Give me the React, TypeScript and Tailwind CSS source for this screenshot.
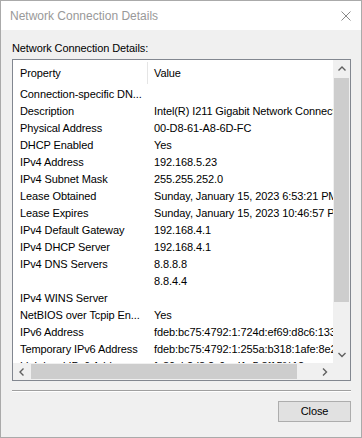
import React from "react";

// Rows of the listview: [property, value]
const rows: [string, string][] = [
  ["Connection-specific DN...", ""],
  ["Description", "Intel(R) I211 Gigabit Network Connection"],
  ["Physical Address", "00-D8-61-A8-6D-FC"],
  ["DHCP Enabled", "Yes"],
  ["IPv4 Address", "192.168.5.23"],
  ["IPv4 Subnet Mask", "255.255.252.0"],
  ["Lease Obtained", "Sunday, January 15, 2023 6:53:21 PM"],
  ["Lease Expires", "Sunday, January 15, 2023 10:46:57 PM"],
  ["IPv4 Default Gateway", "192.168.4.1"],
  ["IPv4 DHCP Server", "192.168.4.1"],
  ["IPv4 DNS Servers", "8.8.8.8"],
  ["", "8.8.4.4"],
  ["IPv4 WINS Server", ""],
  ["NetBIOS over Tcpip En...", "Yes"],
  ["IPv6 Address", "fdeb:bc75:4792:1:724d:ef69:d8c6:1331"],
  ["Temporary IPv6 Address", "fdeb:bc75:4792:1:255a:b318:1afe:8e2c"],
  ["Link-local IPv6 Address", "fe80::b2d8:2c9a:d1e5:8f15%12"],
];

type Dir = "up" | "down" | "left" | "right";

const Arrow = ({ dir }: { dir: Dir }) => {
  const vertical = dir === "up" || dir === "down";
  const d = {
    up: "M0.5 4.5 L4 1 L7.5 4.5",
    down: "M0.5 1 L4 4.5 L7.5 1",
    left: "M4.5 0.5 L1 4 L4.5 7.5",
    right: "M1 0.5 L4.5 4 L1 7.5",
  }[dir];
  return (
    <svg
      width={vertical ? 8 : 6}
      height={vertical ? 6 : 8}
      viewBox={vertical ? "0 0 8 6" : "0 0 6 8"}
      fill="none"
      stroke="#606060"
      strokeWidth={1.4}
    >
      <path d={d} />
    </svg>
  );
};

export default function App() {
  return (
    <div className="w-[362px] h-[438px] bg-[#f0f0f0] border border-[#aaaaaa] flex flex-col font-['Liberation_Sans',Arial,sans-serif] text-black text-[11px] tracking-[-0.1px]">
      {/* title bar */}
      <div className="h-[29px] bg-white flex items-center justify-between pl-[9px] pr-[10px]">
        <span className="text-[12px] tracking-normal text-[#999999]">Network Connection Details</span>
        <svg width="10" height="10" viewBox="0 0 10 10" stroke="#8a8a8a" strokeWidth={1}>
          <path d="M0.5 0.5 L9.5 9.5 M9.5 0.5 L0.5 9.5" />
        </svg>
      </div>

      <div className="flex flex-col pl-[11px] pr-[10px]">
        <div className="mt-[12px] leading-[13px]">Network Connection Details:</div>

        {/* listview */}
        <div className="mt-[4px] h-[322px] border border-[#828790] bg-white grid grid-cols-[1fr_17px] grid-rows-[1fr_17px]">
          <div className="overflow-hidden">
            <div className="h-[26px] flex">
              <div className="w-[134px] pl-[7px] flex items-center">Property</div>
              <div className="w-px my-[2px] bg-[#e5e5e5]" />
              <div className="pl-[6px] flex items-center">Value</div>
            </div>
            {rows.map(([prop, val], i) => (
              <div key={i} className="h-[17px] leading-[17px] flex whitespace-nowrap">
                <div className="w-[134px] shrink-0 pl-[7px] overflow-hidden">{prop}</div>
                <div className="w-px shrink-0" />
                <div className="pl-[6px] shrink-0">{val}</div>
              </div>
            ))}
          </div>

          {/* vertical scrollbar */}
          <div className="bg-[#f0f0f0] flex flex-col">
            <div className="h-[17px] flex items-center justify-center">
              <Arrow dir="up" />
            </div>
            <div className="mt-[1px] mx-[1px] h-[224px] bg-[#cdcdcd]" />
            <div className="flex-1" />
            <div className="h-[17px] flex items-center justify-center">
              <Arrow dir="down" />
            </div>
          </div>

          {/* horizontal scrollbar */}
          <div className="bg-[#f0f0f0] flex">
            <div className="w-[17px] flex items-center justify-center">
              <Arrow dir="left" />
            </div>
            <div className="ml-[1px] my-[1px] w-[266px] bg-[#cdcdcd]" />
            <div className="flex-1" />
            <div className="w-[17px] flex items-center justify-center">
              <Arrow dir="right" />
            </div>
          </div>
          <div className="bg-[#f0f0f0]" />
        </div>

        {/* etched separator */}
        <div className="mt-[9px] h-[2px] border-t border-[#a0a0a0] border-b border-b-white" />

        <div className="mt-[9px] flex justify-end">
          <button className="w-[73px] h-[21px] bg-[#e1e1e1] border border-[#adadad] text-[11px] leading-none">
            Close
          </button>
        </div>
      </div>
    </div>
  );
}
